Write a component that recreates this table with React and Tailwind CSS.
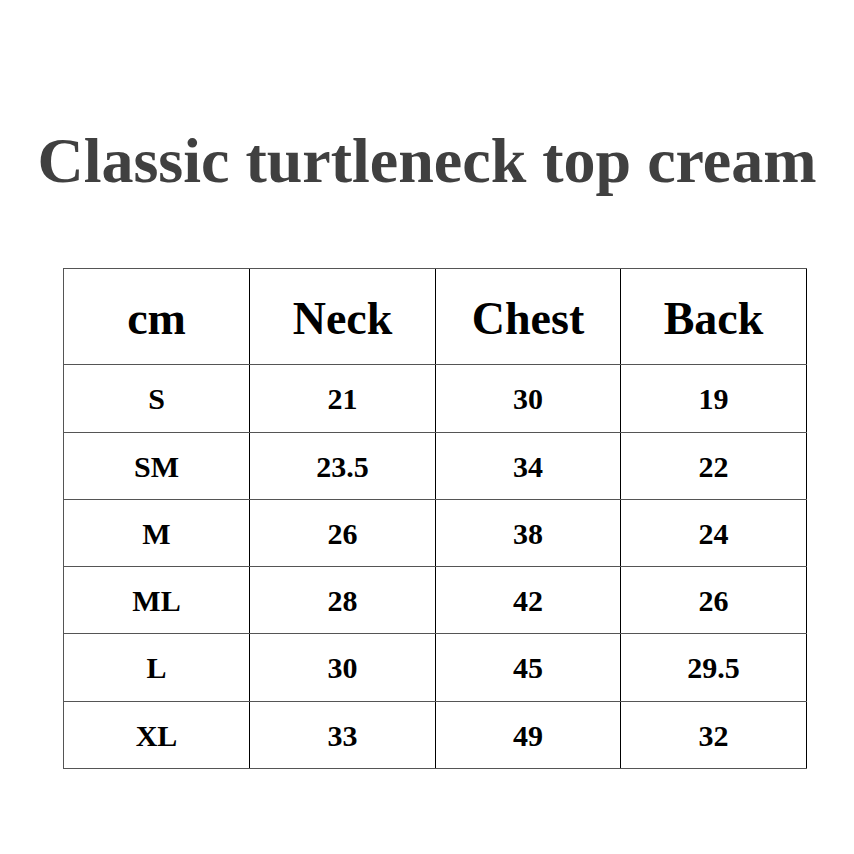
import React from 'react';

const header = ['cm', 'Neck', 'Chest', 'Back'];

const rows = [
    ['S', '21', '30', '19'],
    ['SM', '23.5', '34', '22'],
    ['M', '26', '38', '24'],
    ['ML', '28', '42', '26'],
    ['L', '30', '45', '29.5'],
    ['XL', '33', '49', '32'],
];

const rowHeights = ['h-[68px]', 'h-[67px]', 'h-[67px]', 'h-[67px]', 'h-[68px]', 'h-[67px]'];
const colWidths = ['w-[186px]', 'w-[186px]', 'w-[185px]', 'w-[186px]'];

const App = () => {
    return (
        <div
            className="w-[854px] h-[854px] bg-white text-black"
            style={{ fontFamily: '"Liberation Serif", "Times New Roman", serif' }}
        >
            <h1 className="pt-[129px] text-center text-[64px] leading-[63px] font-bold text-[#404040]">
                Classic turtleneck top cream
            </h1>

            <div className="mt-[76px] ml-[63px] w-[744px] border-t border-l border-[#555]">
                <div className="flex h-[96px] border-b border-[#555]">
                    {header.map((h, i) => (
                        <div
                            key={h}
                            className={`${colWidths[i]} border-r border-black flex items-center justify-center pt-[4px] text-[46px] font-bold`}
                        >
                            {h}
                        </div>
                    ))}
                </div>
                {rows.map((row, r) => (
                    <div key={row[0]} className={`flex ${rowHeights[r]} border-b border-[#555]`}>
                        {row.map((cell, i) => (
                            <div
                                key={i}
                                className={`${colWidths[i]} border-r border-black flex items-center justify-center text-[30px] font-bold`}
                            >
                                {cell}
                            </div>
                        ))}
                    </div>
                ))}
            </div>
        </div>
    );
};

export default App;
